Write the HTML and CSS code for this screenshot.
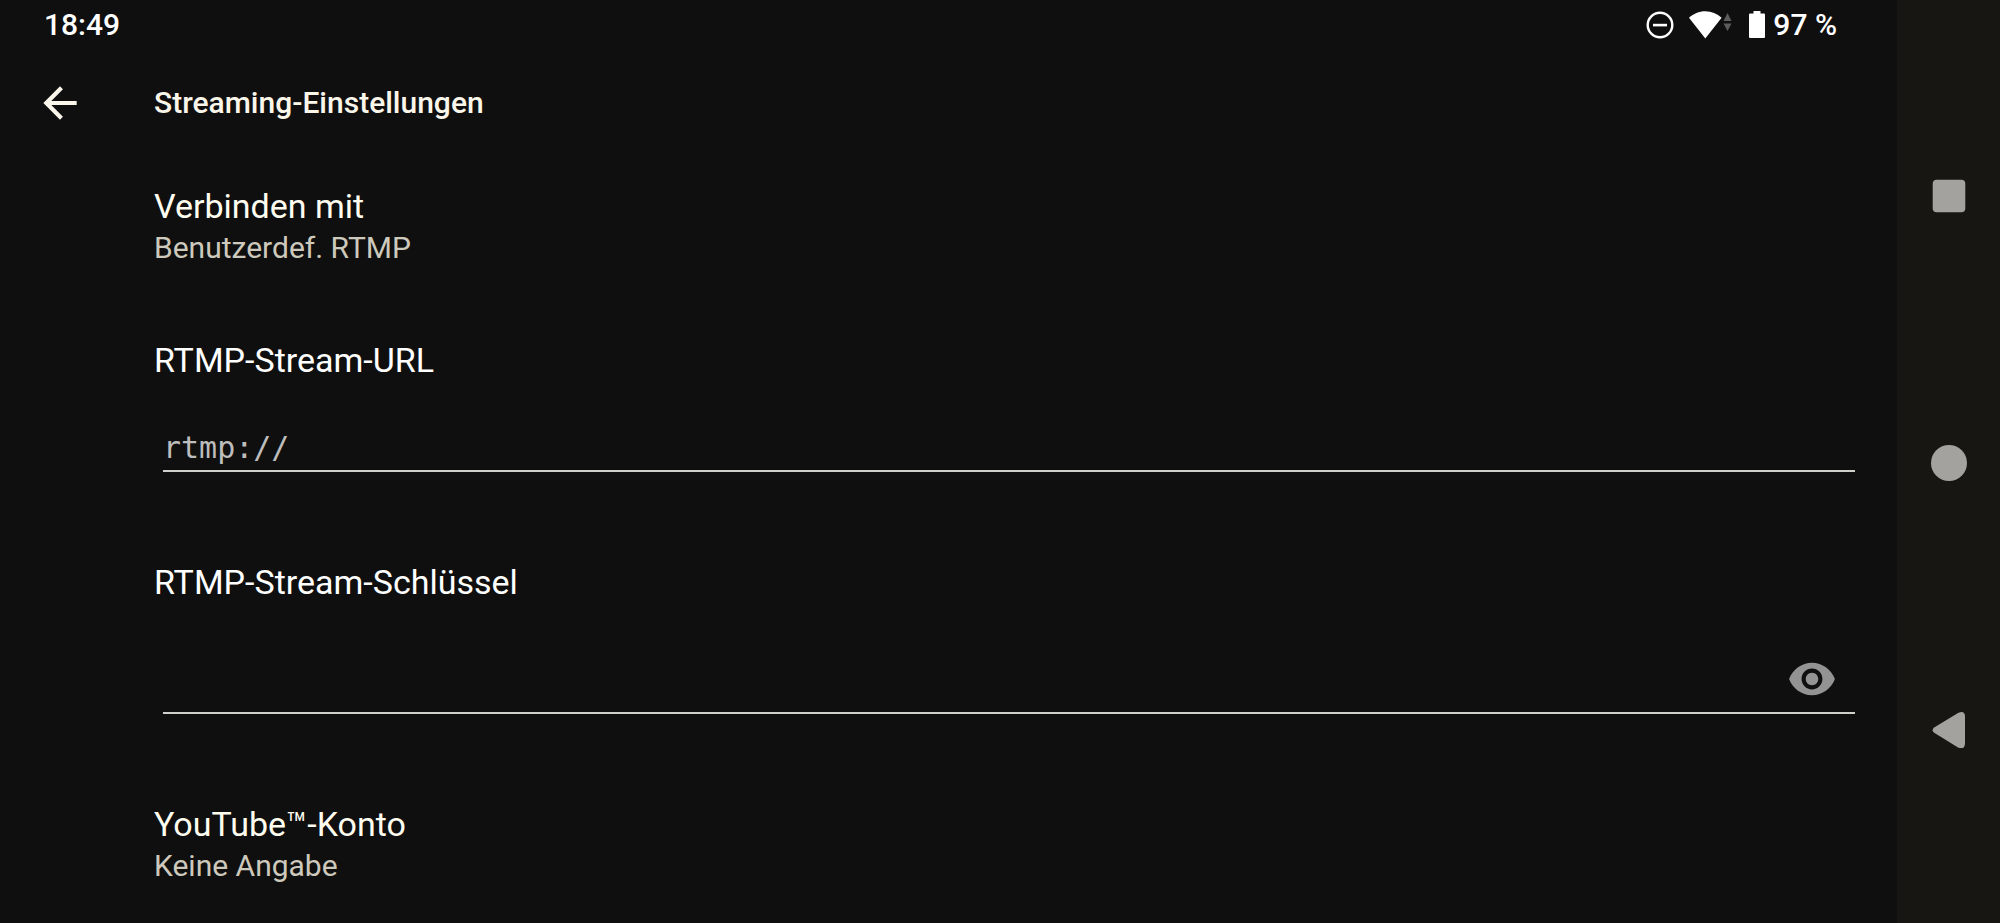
FILE: index.html
```html
<!DOCTYPE html>
<html lang="de">
<head>
  <meta charset="UTF-8">
  <meta name="viewport" content="width=device-width, initial-scale=1">
  <title>Streaming-Einstellungen</title>
  <link rel="stylesheet" href="styles.css">
</head>
<body>

  <div class="app">
    <div class="statusbar">
      <span>18:49</span>
      <div class="status-icons">
        <svg class="dnd" width="28" height="28" viewBox="0 0 28 28">
          <circle cx="14" cy="14" r="12.3" fill="none" stroke="#fff" stroke-width="2.4"/>
          <path d="M7 12.8h14v2.6H7z" fill="#fff"/>
        </svg>
        <svg class="wifi" width="44" height="28" viewBox="0 0 44 28">
          <path d="M0 6.8C4.5 2.6 10 .2 16.3 .2S28 2.6 32.6 6.8L16.3 27.5z" fill="#fff"/>
          <path d="M38.500 2l4 8h-8zM38.500 20l-4-7.500h8z" fill="#5c5c5c"/>
        </svg>
        <svg class="battery" width="16" height="28" viewBox="0 0 16 28">
          <path d="M4.500 0h7v2.500H15q1 0 1 1V26q0 1-1 1H1q-1 0-1-1V3.500q0-1 1-1h3.500z" fill="#fff"/>
        </svg>
        <span>97 %</span>
      </div>
    </div>

    <header class="toolbar">
      <button type="button" class="back" aria-label="Zurück">
        <svg width="50" height="50" viewBox="0 0 24 24">
          <path d="M20 11H7.830l5.590-5.590L12 4l-8 8 8 8 1.410-1.410L7.830 13H20z" fill="#fbf6ea"/>
        </svg>
      </button>
      <h1>Streaming-Einstellungen</h1>
    </header>

    <main class="settings">
      <section class="pref">
        <h2>Verbinden mit</h2>
        <p>Benutzerdef. RTMP</p>
      </section>

      <section class="pref-field">
        <label for="stream-url">RTMP-Stream-URL</label>
        <div class="field">
          <input type="text" id="stream-url" placeholder="rtmp://">
        </div>
      </section>

      <section class="pref-field">
        <label for="stream-key">RTMP-Stream-Schlüssel</label>
        <div class="field field-key">
          <input type="password" id="stream-key">
          <button type="button" id="toggle-key" aria-label="Schlüssel anzeigen">
            <svg width="50" height="50" viewBox="0 0 24 24">
              <path d="M12 4.200C7 4.200 2.730 7.500 1 12c1.730 4.500 6 7.800 11 7.800s9.270-3.300 11-7.800c-1.730-4.500-6-7.800-11-7.800zM12 17c-2.760 0-5-2.240-5-5s2.240-5 5-5 5 2.240 5 5-2.240 5-5 5zm0-8c-1.660 0-3 1.340-3 3s1.340 3 3 3 3-1.340 3-3-1.340-3-3-3z" fill="#939393"/>
            </svg>
          </button>
        </div>
      </section>

      <section class="pref">
        <h2>YouTube™-Konto</h2>
        <p>Keine Angabe</p>
      </section>
    </main>
  </div>

  <nav class="navbar">
    <button type="button" aria-label="Übersicht">
      <svg width="36" height="36" viewBox="0 0 36 36"><rect x="1.700" y="1.700" width="32.600" height="32.600" rx="4"/></svg>
    </button>
    <button type="button" aria-label="Startseite">
      <svg width="36" height="36" viewBox="0 0 36 36"><circle cx="18" cy="18" r="18"/></svg>
    </button>
    <button type="button" aria-label="Zurück">
      <svg width="36" height="36" viewBox="0 0 36 36"><path d="M3.200 15.600 27 1Q33.500-2 34 4V32Q33.500 38 27 35.500L3.200 20.800Q0 18.200 3.200 15.600z"/></svg>
    </button>
  </nav>

  <script>
    const key = document.getElementById('stream-key');

    document.getElementById('toggle-key').addEventListener('click', function() {
      key.type = key.type === 'password' ? 'text' : 'password';
    });
  </script>

</body>
</html>
```
FILE: styles.css
```css
* {
  box-sizing: border-box;
}

body {
  margin: 0;
  min-height: 100vh;
  display: flex;
  background: #0f0f0f;
  color: #fff;
  font-family: Roboto, sans-serif;
  font-size: 30px;
}

h1, h2, p {
  margin: 0;
}

svg {
  display: block;
}

button {
  padding: 0;
  border: none;
  background: none;
  cursor: pointer;
}

.app {
  flex: 1;
  min-width: 0;
}

/* status bar */
.statusbar {
  display: flex;
  justify-content: space-between;
  padding: 10px 60px 10px 44px;
  line-height: 30px;
  font-weight: 500;
}

.status-icons {
  display: flex;
  align-items: center;
}

.wifi {
  margin-left: 15px;
}

.battery {
  margin: 0 8px 0 16px;
}

/* toolbar */
.toolbar {
  display: flex;
  align-items: center;
  gap: 69px;
  padding: 28px 35px 0;
}

.toolbar h1 {
  color: #fbf6ea;
  font-size: 30px;
  font-weight: 500;
  line-height: 50px;
}

/* settings list */
.settings {
  display: flex;
  flex-direction: column;
  padding: 58px 42px 36px 154px;
}

.pref h2,
.pref-field label {
  display: block;
  font-size: 34px;
  font-weight: 400;
  line-height: 40px;
}

.pref h2 {
  color: #fffdf0;
}

.pref p {
  color: #cdc9bc;
  line-height: 44px;
}

.pref-field {
  padding: 70px 0 20px;
}

.field {
  display: flex;
  align-items: center;
  margin: 48px 0 0 9px;
  padding-bottom: 4px;
  border-bottom: 2px solid #cfcfcc;
}

.field input {
  flex: 1;
  min-width: 0;
  height: 38px;
  padding: 0;
  border: none;
  outline: none;
  background: none;
  color: #fff;
  font-family: "DejaVu Sans Mono", monospace;
  font-size: 30px;
}

.field input::placeholder {
  color: #bdbdbd;
  opacity: 1;
}

.field-key {
  padding: 4px 18px 8px 0;
}

.pref-field + .pref {
  padding-top: 70px;
}

/* system navigation */
.navbar {
  width: 103px;
  display: grid;
  grid-template-rows: repeat(3, 1fr);
  place-items: center;
  padding: 63px 0 61px;
  background: #171612;
}

.navbar svg {
  fill: #a3a29f;
}
```
